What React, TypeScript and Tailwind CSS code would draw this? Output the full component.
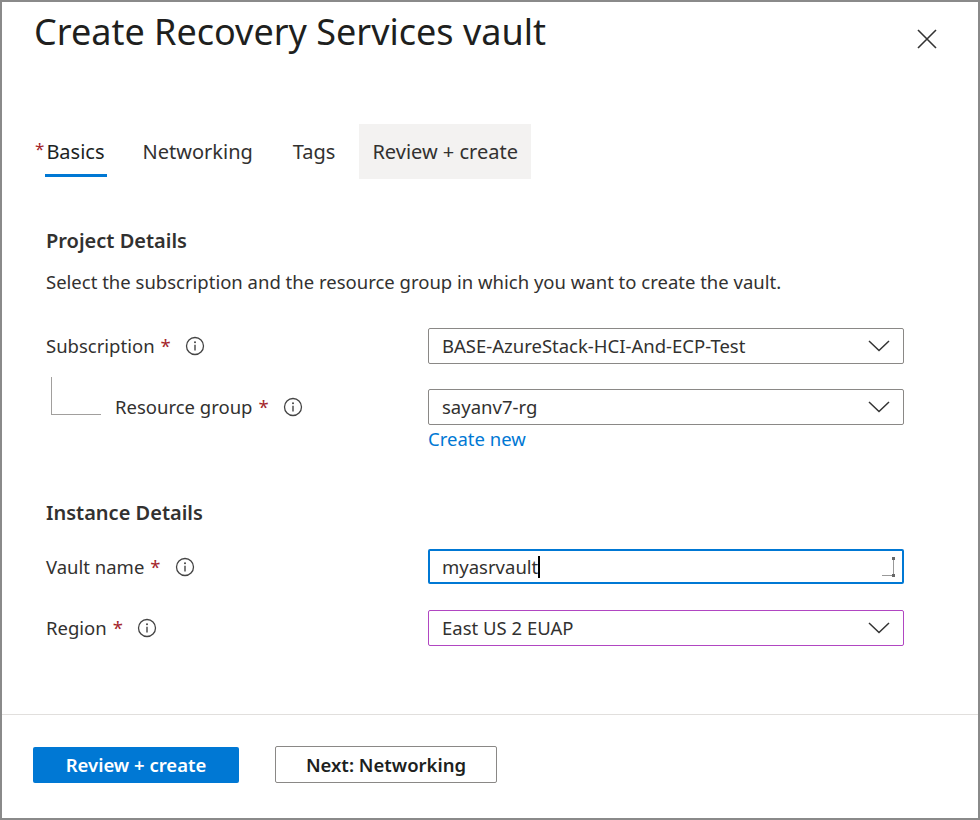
import React from "react";

const Info = () => (
  <svg width="20" height="20" viewBox="0 0 20 20" className="shrink-0">
    <circle cx="10" cy="10" r="8.5" fill="none" stroke="#444" strokeWidth="1.3" />
    <circle cx="10" cy="6.2" r="1" fill="#444" />
    <line x1="10" y1="8.8" x2="10" y2="14.5" stroke="#444" strokeWidth="1.4" />
  </svg>
);
const Chev = () => (
  <svg width="22" height="12" viewBox="0 0 22 12"><path d="M1 1 L11 10.5 L21 1" fill="none" stroke="#333" strokeWidth="1.5" /></svg>
);
const Star = () => <span className="text-[#a4262c] ml-[6px]">*</span>;

function Row({ label, children, indent = false, mt }: { label: string; children: React.ReactNode; indent?: boolean; mt: string }) {
  return (
    <div className={`flex items-center ${mt}`}>
      <div className={`w-[382px] flex items-center ${indent ? "pl-[69px]" : ""}`}>
        <span>{label}</span><Star /><span className="ml-[14px] flex"><Info /></span>
      </div>
      {children}
    </div>
  );
}

function Select({ value, border = "border-[#8a8886]" }: { value: string; border?: string }) {
  return (
    <div className={`w-[476px] h-[36px] border ${border} rounded-[2px] flex items-center justify-between pl-[13px] pr-[13px]`}>
      <span>{value}</span><Chev />
    </div>
  );
}

export default function App() {
  return (
    <div className="w-[980px] h-[820px] bg-white text-[#323130] text-[18.5px] border-t-2 border-l-2 border-r-2 border-b-2 border-[#8a8a8a] relative overflow-hidden" style={{ fontFamily: '"Noto Sans", sans-serif' }}>
      <div className="flex justify-between pl-[32px] pr-[40px] pt-[6px]">
        <h1 className="text-[36px] leading-[48px] text-[#201f1e]">Create Recovery Services vault</h1>
        <svg width="22" height="22" viewBox="0 0 22 22" className="mt-[20px]"><path d="M2 2 L20 20 M20 2 L2 20" stroke="#333" strokeWidth="1.6" /></svg>
      </div>
      <div className="flex items-stretch ml-[31px] mt-[68px] h-[55px] text-[20px]">
        <div className="relative flex items-center px-[2px]">
          <span className="text-[#a4262c] text-[17px] -mt-[6px] mr-[2px]">*</span>
          <span className="text-[#201f1e]">Basics</span>
          <div className="absolute left-[12px] right-[0px] bottom-[2px] h-[3px] bg-[#0078d4]" />
        </div>
        <div className="flex items-center ml-[36px]">Networking</div>
        <div className="flex items-center ml-[40px]">Tags</div>
        <div className="flex items-center ml-[24px] px-[13px] bg-[#f3f2f1]">Review + create</div>
      </div>
      <div className="pl-[44px]">
        <h2 className="text-[20px] font-semibold mt-[48px] leading-[28px]">Project Details</h2>
        <p className="mt-[14px] leading-[26px]">Select the subscription and the resource group in which you want to create the vault.</p>
        <Row label="Subscription" mt="mt-[33px]"><Select value="BASE-AzureStack-HCI-And-ECP-Test" /></Row>
        <div className="relative">
          <div className="absolute left-[5px] -top-[12px] w-[50px] h-[38px] border-l border-b border-[#a19f9d]" />
          <Row label="Resource group" indent mt="mt-[25px]"><Select value="sayanv7-rg" /></Row>
        </div>
        <div className="ml-[382px] mt-[1px] text-[#0078d4] leading-[26px]">Create new</div>
        <h2 className="text-[20px] font-semibold mt-[47px] leading-[28px]">Instance Details</h2>
        <Row label="Vault name" mt="mt-[22px]">
          <div className="w-[476px] h-[35px] border-2 border-[#0078d4] rounded-[2px] flex items-center justify-between pl-[12px] pr-[6px]">
            <span className="flex items-center">myasrvault<span className="w-[1.5px] h-[22px] bg-black" /></span>
            <svg width="16" height="22" viewBox="0 0 16 22"><rect x="12" y="1" width="3" height="3" fill="#666" /><line x1="13.5" y1="4" x2="13.5" y2="18" stroke="#999" /><line x1="2" y1="19.5" x2="12" y2="19.5" stroke="#999" /><rect x="12" y="18" width="3" height="3" fill="#666" /></svg>
          </div>
        </Row>
        <Row label="Region" mt="mt-[26px]"><Select value="East US 2 EUAP" border="border-[#b146c2]" /></Row>
      </div>
      <div className="border-t border-[#e1dfdd] mt-[68px]" />
      <div className="flex items-center pl-[31px] mt-[31px] gap-[36px]">
        <div className="w-[206px] h-[36px] bg-[#0078d4] text-white font-semibold flex items-center justify-center rounded-[2px]">Review + create</div>
        <div className="w-[222px] h-[37px] border border-[#8a8886] rounded-[2px] flex items-center justify-center font-semibold text-[#201f1e]">Next: Networking</div>
      </div>
    </div>
  );
}
